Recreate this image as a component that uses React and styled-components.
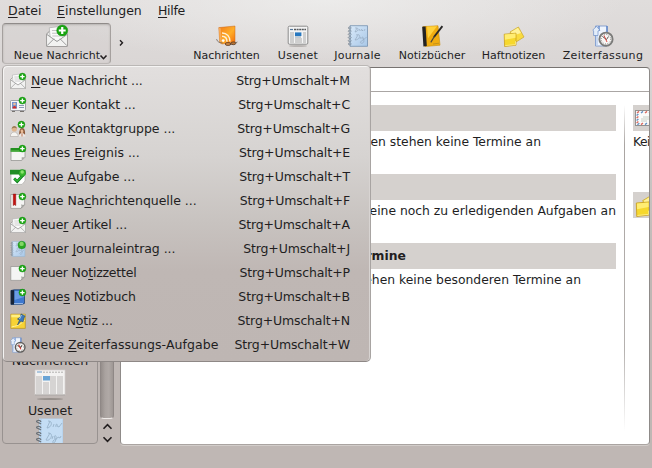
import React from "react";
import styled, { createGlobalStyle } from "styled-components";

const GlobalStyle = createGlobalStyle`
  * { box-sizing: border-box; }
  html, body { margin: 0; padding: 0; overflow: hidden; }
  body { font-family: "DejaVu Sans", sans-serif; color: #221e1f; }
`;

const Window = styled.div`
  position: relative;
  width: 652px;
  height: 468px;
  overflow: hidden;
  display: flex;
  flex-direction: column;
  background:
    radial-gradient(ellipse 300px 64px at 326px 0, rgba(240, 240, 239, 0.75), rgba(240, 240, 239, 0) 100%),
    linear-gradient(#e0dddc 0, #dad6d5 66px, #c9c4c2 180px, #bfb7b4 270px, #bfb7b4 100%);
`;

const MenuBar = styled.nav`
  display: flex;
  flex: 0 0 22px;
  padding-left: 8px;
  gap: 16px;
  font-size: 12.5px;
  line-height: 21px;
`;

const MenuBarItem = styled.span`
  width: ${(p) => p.$width}px;
  white-space: nowrap;
  letter-spacing: ${(p) => p.$spacing || 0}px;
`;

const Key = styled.span`
  text-decoration: underline;
  text-decoration-thickness: 1px;
  text-underline-offset: 2px;
  text-decoration-skip-ink: none;
`;

const ToolBar = styled.div`
  display: flex;
  flex: 0 0 45px;
  overflow: hidden;
  font-size: 11px;
`;

const NewButton = styled.div`
  display: flex;
  flex-direction: column;
  align-items: center;
  flex: 0 0 109px;
  height: 41px;
  margin: 1px 0 0 2px;
  padding-top: 1px;
  border: 1px solid #a5a09e;
  border-top-color: #8f8b89;
  border-bottom-color: #bcb8b6;
  border-radius: 4px;
  background: rgba(190, 185, 182, 0.14);
  box-shadow: inset 0 1px 2px rgba(80, 75, 72, 0.25);
`;

const ButtonLabel = styled.span`
  display: flex;
  align-items: center;
  margin: 1px 0 0 8px;
  line-height: 15px;
  letter-spacing: 0.1px;
  white-space: nowrap;
`;

const Overflow = styled.div`
  flex: 0 0 73px;
  padding: 17px 0 0 8px;
  line-height: 0;
`;

const Tool = styled.div`
  display: flex;
  flex-direction: column;
  align-items: center;
  gap: 1px;
  flex: 0 0 ${(p) => p.$width}px;
  padding-top: 3px;
  line-height: 15px;
  letter-spacing: ${(p) => p.$spacing}px;
  white-space: nowrap;
`;

const Main = styled.div`
  display: flex;
  flex: 0 0 378px;
  padding-left: 2px;
`;

const Sidebar = styled.aside`
  display: flex;
  flex-direction: column;
  align-items: center;
  justify-content: flex-end;
  width: 96px;
  height: 377px;
  overflow: hidden;
  border: 1px solid #989290;
  border-radius: 4px;
  font-size: 12.6px;
`;

const SideLabel = styled.div`
  height: 17px;
  line-height: 19px;
  margin-bottom: ${(p) => p.$after}px;
`;

const ScrollBar = styled.div`
  display: flex;
  flex-direction: column;
  align-items: center;
  width: 22px;
  height: 377px;
`;

const Thumb = styled.div`
  width: 14px;
  height: 352px;
  margin-right: 4px;
  border: 1px solid #8f8886;
  border-bottom-color: #eeeae8;
  border-radius: 4px;
  background: linear-gradient(90deg, #958e8b, #aaa3a0 35%, #b0a9a6 65%, #9e9794);
`;

const Arrow = styled.svg`
  width: 11px;
  height: 7px;
  margin: ${(p) => p.$margin || "0"};
  fill: none;
  stroke: #221e1f;
  stroke-width: 1.6;
`;

const Content = styled.main`
  display: flex;
  flex-direction: column;
  width: 530px;
  height: 378px;
  overflow: hidden;
  background: #fff;
  border: 1px solid #8f8b89;
  border-top-color: #777371;
  border-bottom-color: #aaa4a1;
  border-radius: 4px;
  box-shadow: 0 1px 0 #d2cdca;
`;

const HeaderStrip = styled.div`
  flex: 0 0 24px;
  border-bottom: 1px solid #aaa6a4;
`;

const Columns = styled.div`
  display: flex;
  padding-top: 13px;
  font-size: 12.35px;
`;

const Summary = styled.section`
  width: 495px;
  flex: none;
  padding-left: 12px;
`;

const Divider = styled.div`
  flex: 0 0 1px;
  height: 326px;
  margin: 0 8px;
  background: linear-gradient(#fff, #aaa5a2 12%, #b5b1af 75%, #fff);
`;

const SideSummary = styled.section`
  flex: 0 0 17px;
  overflow: hidden;
  white-space: nowrap;
  letter-spacing: -0.5px;
`;

const SectionBar = styled.h2`
  display: flex;
  align-items: center;
  height: 26px;
  margin: 0;
  padding-left: ${(p) => p.$indent || 0}px;
  background: #d5d1ce;
  font-size: 12.35px;
  font-weight: bold;
`;

const SectionText = styled.p`
  height: ${(p) => p.$height}px;
  margin: 0;
  text-align: ${(p) => (p.$inset === undefined ? "left" : "right")};
  padding: 2px ${(p) => p.$inset || 0}px 0 0;
  line-height: 18px;
  white-space: nowrap;
`;

const Popup = styled.ul`
  position: absolute;
  left: 2px;
  top: 65px;
  width: 369px;
  height: 297px;
  margin: 0;
  padding: 3px 20px 4px 7px;
  list-style: none;
  border: 1px solid #a8a4a2;
  border-top-color: #bab7b5;
  border-bottom-color: #8e8886;
  border-radius: 5px;
  background: linear-gradient(#e2dfde, #d6d3d1 90px, #c8c3c0 155px, #bfb7b4 205px, #beb6b3);
  box-shadow: inset 1px 1px 0 #f5f4f3, inset -1px 0 0 #d8d4d2;
  font-size: 12.5px;
`;

const PopupRow = styled.li`
  display: flex;
  align-items: center;
  height: 24px;
  white-space: nowrap;
`;

const Caption = styled.span`
  flex: 1;
  margin-left: 5px;
  line-height: 16px;
  letter-spacing: ${(p) => p.$spacing}px;
`;

const Shortcut = styled.span`
  line-height: 16px;
  letter-spacing: -0.15px;
`;

const Svg = styled.svg`
  display: block;
  flex: none;
  overflow: visible;
`;

const Plus = ({ x = 12.4, y = 3.6, r = 3.5 }) => (
  <g>
    <circle cx={x} cy={y} r={r} fill="#18a510" stroke="#1c8f1a" strokeWidth=".4" />
    <path d={`M${x - r * 0.63} ${y}H${x + r * 0.63}M${x} ${y - r * 0.63}V${y + r * 0.63}`} stroke="#fff" strokeWidth={r * 0.4} />
  </g>
);

const Mail = ({ size = 16 }) => (
  <Svg width={size} height={size} viewBox="0 0 16 16">
    <path d="M.5 6.5 3 4h10l2.5 2.5v9H.5Z" fill="#e9e9e8" stroke="#92908f" strokeWidth=".7" />
    <path d="m2.4 2 8-1 3 1v7L8 12 3 9Z" fill="#fafafa" stroke="#aaa" strokeWidth=".5" />
    <path d="M4.3 4h4M4.4 6h7M4.6 8h6" stroke="#c4c4c4" strokeWidth=".8" />
    <path d="m.8 7 7.2 5 7.2-5v8.2H.8Z" fill="#f2f2f1" />
    <path d="m.8 15 5-5m9.4 5-5-5M.8 7 8 12l7.2-5" fill="none" stroke="#929292" strokeWidth=".65" />
    {size > 16 ? <Plus x={11.8} y={4} r={4} /> : <Plus />}
  </Svg>
);

const Contact = () => (
  <Svg width="16" height="16" viewBox="0 0 16 16">
    <rect x=".5" y="3.5" width="15" height="10" rx=".7" fill="#f5f6f8" stroke="#a1a1a6" />
    <rect x="2" y="5" width="5" height="6.5" fill="#7593cc" />
    <circle cx="4.5" cy="7" r="1.3" fill="#efbd9b" />
    <path d="M2.5 11.5c0-3.5 4-3.5 4 0" fill="#d32d27" />
    <path d="M9 8.5h5M9 10.5h5" stroke="#8c9bb5" />
    <path d="M2 14.5h3m5 0h4" stroke="#77736f" />
    <Plus />
  </Svg>
);

const Group = () => (
  <Svg width="16" height="16" viewBox="0 0 16 16">
    <path d="M.3 15.5c.2-6 7.5-6 8 0Z" fill="#f5f4f1" stroke="#a39d99" strokeWidth=".5" />
    <circle cx="4.3" cy="8" r="2.6" fill="#dfb48c" />
    <path d="M1.7 8c0-4 5-4 5.2-.6C5 6.4 3 6.5 1.7 8" fill="#987a55" />
    <path d="M9.5 15c-1-3 0-8 2.6-8s3.4 3.4 2.8 8" fill="#8d5a3a" />
    <path d="M8.7 15.5c.2-4.8 6.5-4.8 6.8 0Z" fill="#eee8e4" />
    <path d="M10.6 9c1-1 2.6-.5 2.8 1-.1 1.8-.7 2.4-1.4 2.4S10.6 11 10.6 9" fill="#e8bc98" />
    <path d="M12 12.5v3" stroke="#be7450" />
    <Plus x={11.4} />
  </Svg>
);

const Event = () => (
  <Svg width="16" height="16" viewBox="0 0 16 16">
    <path d="M1 3.5h14v8.7L11.7 15.5H1Z" fill="#f5f5f4" stroke="#8d8d8a" strokeWidth=".7" />
    <path d="M.6 3h14.7v3.8H.6Z" fill="#248f20" />
    <path d="M1 6h14" stroke="#63bd53" />
    <path d="m15 12.2-3.3 3.2v-3.2Z" fill="#aaa9a4" />
    <Plus />
  </Svg>
);

const Task = () => (
  <Svg width="16" height="16" viewBox="0 0 16 16">
    <path d="M1 2h14v10l-3 3.4H1Z" fill="#fff" stroke="#a4a4a1" strokeWidth=".6" />
    <path d="M0 .8h15.5v4.7H0Z" fill="#218e24" />
    <path d="m4.2 9.5 3 3 6-6.5" fill="none" stroke="#0b771d" strokeWidth="2.8" />
    <path d="m4.2 9.2 3 3 6-6.5" fill="none" stroke="#30b733" strokeWidth="1.4" />
    <circle cx="12.2" cy="4" r="3.4" fill="#38b82c" stroke="#138019" strokeWidth=".5" />
    <circle cx="12.2" cy="3" r="1.7" fill="#8be36f" />
  </Svg>
);

const Sheet = ({ ribbon }) => (
  <Svg width="16" height="16" viewBox="0 0 16 16">
    <path d="M.8 1.5h13.8v10L11 15.4H.8Z" fill="#f4f4f3" stroke="#92918e" strokeWidth=".7" />
    <path d="M11 15.4c1-1 .8-2.6.5-3.7 1.2.7 2.2.5 3.1 0Z" fill="#b0b0ac" stroke="#858581" strokeWidth=".4" />
    {ribbon && <path d="M3.2 1h2.6v11.6l-1.3-.8-1.3.8Z" fill="#c41211" stroke="#830e0c" strokeWidth=".4" />}
    <Plus />
  </Svg>
);

const Journal = ({ size = 22, plus }) => (
  <Svg width={size} height={size} viewBox="0 0 22 22">
    <defs>
      <linearGradient id="journalPaper" x1="0" y1="0" x2="1" y2="1">
        <stop stopColor="#d9e9f9" />
        <stop offset="1" stopColor="#a9c8e8" />
      </linearGradient>
    </defs>
    <path d="M3 .7h17.5v20.6H3Z" fill="url(#journalPaper)" stroke={plus ? "#9bb6cf" : "#7590ae"} strokeWidth=".8" />
    {[3, 6.2, 9.4, 12.6, 15.8, 19].map((y) => (
      <path key={y} d={`M4.6 ${y}c-1-1.6-3.4-1-3.4 0s2.4.8 2.8.8`} fill="none" stroke="#6f7c89" strokeWidth=".7" />
    ))}
    <path d="M8 3c5-1 3 4 0 4l2-4m2 3 .6-2m1.4 2c-1-2 2-2 1 0l1-1m1 1 1-2m-9 6c6-2 4 5-1 5l3-5m2 4 .5-2m2 2c-2-2 1-3 1 0 2 5-4 5-3 3s4-2 6-5" fill="none" stroke="#8ea2b8" strokeWidth=".6" />
    {plus && <g><circle cx="16.2" cy="5.6" r="5.3" fill="#2aa820" stroke="#16811a" strokeWidth=".6" /><circle cx="16" cy="4" r="3" fill="#82d765" /></g>}
  </Svg>
);

const Book = () => (
  <Svg width="16" height="16" viewBox="0 0 16 16">
    <path d="M1 1.5 4 .8h10.5v13.6L12 15.4H1Z" fill="#3e78cf" stroke="#143564" strokeWidth=".7" />
    <path d="M4.5 2h9.6v6L4.5 11Z" fill="#699ce4" />
    <path d="M.8 1.2h3.4v14.3H.8Z" fill="#172438" />
    <path d="M4 14.7h9" stroke="#aec8ed" />
    <Plus />
  </Svg>
);

const Note = () => (
  <Svg width="16" height="16" viewBox="0 0 16 16">
    <path d="M.8 1.2h14.5v14.2H.8Z" fill="#f7d335" stroke="#b99220" strokeWidth=".7" />
    <path d="M1.3 1.7h13.5v2.6H1.3Z" fill="#ffef82" />
    <path d="M1.5 14c4-1 9-1.5 13-7" fill="none" stroke="#fff2a0" />
    <path d="m11 1 4 2-1 2-1 4-2-1-3.5 4 2-5-2-1 3-2Z" fill="#3e78ba" stroke="#21486f" strokeWidth=".6" />
    <path d="m11.5 2-2 4" stroke="#a7cbee" strokeWidth="1" />
  </Svg>
);

const Clock = ({ size = 22 }) => (
  <Svg width={size} height={size} viewBox="0 0 22 22">
    <path d="M3.5 1H15v20H3.5Z" fill="#eef4fd" stroke="#7d9bce" strokeWidth=".9" />
    <path d="M7 1v5M15 1v7" stroke="#4e79c4" strokeWidth="1.2" />
    <path d="m.8 5 3.6-3.6L8 5.2 6 6v4.5H1.6V6Z" fill="#e3edfa" stroke="#6a8cc6" strokeWidth=".7" />
    <path d="M5 11v9" stroke="#b9cdec" strokeWidth="1.4" />
    <circle cx="14" cy="14.2" r="6.6" fill="#f8f7f5" stroke={size > 16 ? "#7b7b79" : "#5c5a58"} strokeWidth="1.9" />
    <circle cx="14" cy="14.2" r="4.7" fill="none" stroke="#5d5b58" strokeWidth="1" strokeDasharray=".7 1.76" />
    <path d="m10.5 11.5 4 3 2-3" fill="none" stroke="#4a4846" strokeWidth={size > 16 ? 0.9 : 1.5} />
    <path d="m12 10.5 3 6.5" stroke="#d8362e" strokeWidth={size > 16 ? 0.9 : 1.4} />
  </Svg>
);

const Feed = () => (
  <Svg width="22" height="22" viewBox="0 0 22 22">
    <defs><linearGradient id="feedFace" x1="0" y1="0" x2="1" y2="1"><stop stopColor="#f27b18" /><stop offset=".55" stopColor="#ffae28" /><stop offset="1" stopColor="#f36a0b" /></linearGradient></defs>
    <path d="M2.8 2.6 19 1v16L6 19l-2.2-1.4Z" fill="url(#feedFace)" stroke="#c96a1c" strokeWidth=".5" />
    <path d="m2.8 2.6 2 .8.8 15-1.8-1Z" fill="#f7a956" />
    <path d="M6 11.2c3.4 0 5 2.4 5 5.6M6 8c5 0 8 3.6 8 8.4" fill="none" stroke="#fff0d7" strokeWidth="1.4" />
    <circle cx="7.2" cy="15.6" r="1.4" fill="#fff" />
    <path d="M.6 14.2c.4 2.2 2.6 3.6 6 3.8m6 1.4c4 .4 6-1.2 8.8-2.4" fill="none" stroke="#6a5b50" strokeWidth=".8" />
    <ellipse cx="12" cy="19" rx="2.8" ry="1.5" fill="#c98440" stroke="#51311c" strokeWidth=".7" />
    <ellipse cx="17.4" cy="18.3" rx="2.4" ry="1.4" fill="#b87434" stroke="#49311f" strokeWidth=".7" />
  </Svg>
);

const News = () => (
  <Svg width="22" height="22" viewBox="0 0 22 22">
    <ellipse cx="11" cy="21" rx="9" ry="1" fill="#b8b4b2" />
    <rect x="1.2" y="1.2" width="19.6" height="18" rx="1.2" fill="#f4f4f4" stroke="#8b8b8b" />
    <path d="M3 4.5h3" stroke="#55789b" strokeWidth="1.2" />
    <path d="M7 4.5h12" stroke="#55585b" strokeWidth="1.4" strokeDasharray="2 .6" />
    <path d="M3 7h4v11H3Zm13 0h3v11h-3ZM8 13h7v5H8Z" fill="#cfcfcf" />
    <path d="M8 7.4h6.4V11H8Z" fill="#2878bf" />
    <path d="M8 12h6" stroke="#8ba2b6" />
  </Svg>
);

const Notebook = () => (
  <Svg width="22" height="22" viewBox="0 0 22 22">
    <path d="m2 1.6 15-.8 2 19.4L4 21.5Z" fill="#f0ac10" stroke="#c98e0c" strokeWidth=".6" />
    <path d="m6 1.6 10-.4-9 12Z" fill="#ffd13b" />
    <path d="m1.2 1.8 3.4-.4 1.2 19.6-3.4.4Z" fill="#232323" />
    <path d="M21.4 1.2 13 12" stroke="#292827" strokeWidth="1.9" />
    <path d="m13.4 11.4-3.6 6" stroke="#48443e" strokeWidth="1.1" />
    <path d="m12 19 6-.8" stroke="#b98a1a" strokeWidth=".8" />
  </Svg>
);

const Sticky = ({ size = 22 }) => (
  <Svg width={size} height={size} viewBox="0 0 22 22">
    <path d="m7 7 8.4-5L21 12l-8 5Z" fill="#f9db3f" stroke="#c9a52e" strokeWidth=".7" />
    <path d="m8 7 7-4.2 3 5.2-9 3Z" fill="#fff299" />
    <path d="m1.2 9.2 11.8-1v12L1.6 21.5Z" fill="#f6d82d" stroke="#c9a022" strokeWidth=".8" />
    <path d="m1.8 9.6 10.7-1v4.2l-10.6 2Z" fill="#ffed72" />
    <path d="m2.2 20.6 10.3-1v-3.4" fill="none" stroke="#fff4a2" strokeWidth=".7" />
  </Svg>
);

const LargeNews = () => (
  <Svg width="32" height="32" viewBox="0 0 32 32">
    <ellipse cx="16" cy="30" rx="13" ry="1" fill="#968f8b" />
    <path d="M1 1h30v25H1Z" fill="#f3f2f1" stroke="#d3cfcd" strokeWidth=".7" />
    <path d="M3 3h5" stroke="#689ccc" />
    <path d="M9 3.2h20" stroke="#b1b0ae" strokeDasharray="2 1" />
    <path d="M2 7h6v18H2Zm7 6h6v12H9Zm7-6h6v18h-6Zm7 0h6v18h-6Z" fill="#d6d4d3" />
    <path d="M9 7h7v4.5H9Z" fill="#68a3d5" />
    <path d="M1 26h30" stroke="#a4a09e" />
  </Svg>
);

const LargeJournal = () => (
  <Svg width="32" height="25" viewBox="0 0 32 25">
    <path d="M5 .5h24V25H5Z" fill="#b8d4ee" />
    <path d="M8 1h20v24H8Z" fill="#c4ddf4" />
    {[4, 10, 16, 22].map((y) => <path key={y} d={`M7 ${y}c-1-3-6-1-4 0s3 1 4 2`} fill="none" stroke="#6b7279" strokeWidth="1.2" />)}
    <path d="M14 3c6 0 3 7-1 7l3-7m3 6 1-3m2 3c-1-3 2-4 1-1l2 1 3-4m-14 10c7 0 2 9-2 7l4-7m2 6 1-3m2 3c-2-4 2-5 1 0-1 5-4 5-3 2 1-2 4-1 5-4l2 1 1-2" fill="none" stroke="#94aec5" strokeWidth=".8" />
  </Svg>
);

const AirMail = () => (
  <Svg width="24" height="18" viewBox="0 0 24 18">
    <rect x=".5" y="1.5" width="23" height="15" fill="#fbfbfa" stroke="#92908f" />
    <path d="m2 4 2-1.6M10 4l2-1.6M18 4l2-1.6M1.6 9l1.8-1.6M6 15.6 8 14m6 1.6 2-1.6M1.6 14l1.8-1.6" stroke="#dc6a60" strokeWidth="1.4" />
    <path d="m6 4 2-1.6M14 4l2-1.6M1.6 6.6 3.4 5m-1.8 6.6L3.4 10M2.4 15.8l2-1.6m5.6 1.4 2-1.6m6 1.6 2-1.6" stroke="#6492c4" strokeWidth="1.4" />
    <path d="M8 8h8m-10 2h10m-10 2h6" stroke="#bcc5ba" strokeWidth=".8" />
  </Svg>
);

const menuItems = [
  ["", "N", "eue Nachricht ...", "M", Mail, -0.05],
  ["Ne", "u", "er Kontakt ...", "C", Contact, -0.05],
  ["Neue ", "K", "ontaktgruppe ...", "G", Group, -0.03],
  ["Neues ", "E", "reignis ...", "E", Event],
  ["Neue ", "A", "ufgabe ...", "T", Task, -0.03],
  ["Neue Na", "c", "hrichtenquelle ...", "F", () => <Sheet ribbon />, -0.03],
  ["Neue", "r", " Artikel ...", "A", Mail, -0.1],
  ["Neuer ", "J", "ournaleintrag ...", "J", () => <Journal size={16} plus />, -0.05],
  ["Neuer No", "t", "izzettel", "P", Sheet, -0.2],
  ["Neue", "s", " Notizbuch", "B", Book, -0.05],
  ["Neue N", "o", "tiz ...", "N", Note, -0.2],
  ["Neue ", "Z", "eiterfassungs-Aufgabe", "W", () => <Clock size={16} />, 0.06],
];

const tools = [
  ["Nachrichten", 85, Feed, 0],
  ["Usenet", 58, News, 0.3],
  ["Journale", 61, Journal, 0.2],
  ["Notizbücher", 88, Notebook, 0],
  ["Haftnotizen", 75, Sticky, 0],
  ["Zeiterfassung", 104, Clock, 0.35],
];

export default function App() {
  return (
    <>
      <GlobalStyle />
      <Window>
        <MenuBar>
          <MenuBarItem $width={33}><Key>D</Key>atei</MenuBarItem>
          <MenuBarItem $width={85}><Key>E</Key>instellungen</MenuBarItem>
          <MenuBarItem $width={30} $spacing={-0.3}><Key>H</Key>ilfe</MenuBarItem>
        </MenuBar>
        <ToolBar>
          <NewButton>
            <Mail size={22} />
            <ButtonLabel>
              Neue Nachricht
              <Arrow viewBox="0 0 11 7" $margin="3px -2px 0 -2px"><path d="m2.5 1.5 3 3.2 3-3.2" /></Arrow>
            </ButtonLabel>
          </NewButton>
          <Overflow>
            <svg width="5" height="8" viewBox="0 0 5 8"><path d="m1 1.2 2.5 2.6L1 6.4" fill="none" stroke="#221e1f" strokeWidth="1.4" /></svg>
          </Overflow>
          {tools.map(([name, width, Icon, spacing]) => (
            <Tool key={name} $width={width} $spacing={spacing}><Icon />{name}</Tool>
          ))}
        </ToolBar>
        <Main>
          <Sidebar>
            <SideLabel $after={1}>Nachrichten</SideLabel>
            <LargeNews />
            <SideLabel $after={0}>Usenet</SideLabel>
            <LargeJournal />
          </Sidebar>
          <ScrollBar>
            <Thumb />
            <Arrow viewBox="0 0 11 7" $margin="4px 4px 0 0"><path d="m1.5 5.8 4-4.2 4 4.2" /></Arrow>
            <Arrow viewBox="0 0 11 7" $margin="6px 4px 0 0"><path d="m1.5 1.2 4 4.2 4-4.2" /></Arrow>
          </ScrollBar>
          <Content>
            <HeaderStrip />
            <Columns>
              <Summary>
                <SectionBar />
                <SectionText $height={43} $inset={75}>In den nächsten 7 Tagen stehen keine Termine an</SectionText>
                <SectionBar />
                <SectionText $height={43} $inset={0}>Es stehen keine noch zu erledigenden Aufgaben an</SectionText>
                <SectionBar $indent={139}>Besondere Termine</SectionBar>
                <SectionText $height={43} $inset={35}>In den nächsten 7 Tagen stehen keine besonderen Termine an</SectionText>
              </Summary>
              <Divider />
              <SideSummary>
                <SectionBar $indent={2}><AirMail /></SectionBar>
                <SectionText $height={61}>Keine</SectionText>
                <SectionBar $indent={2}><Sticky size={24} /></SectionBar>
              </SideSummary>
            </Columns>
          </Content>
        </Main>
        <Popup>
          {menuItems.map(([before, key, after, shortcut, Icon, spacing = 0]) => (
            <PopupRow key={shortcut}>
              <Icon />
              <Caption $spacing={spacing}>{before}<Key>{key}</Key>{after}</Caption>
              <Shortcut>Strg+Umschalt+{shortcut}</Shortcut>
            </PopupRow>
          ))}
        </Popup>
      </Window>
    </>
  );
}
